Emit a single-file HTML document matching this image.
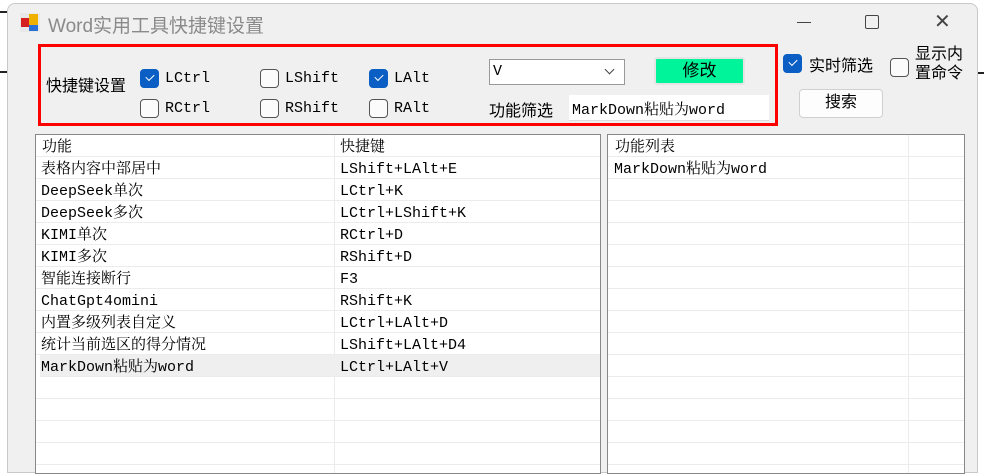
<!DOCTYPE html>
<html><head><meta charset="utf-8"><style>
*{margin:0;padding:0;box-sizing:border-box}
body{width:984px;height:462px;background:#fff;position:relative;overflow:hidden;font-family:"Liberation Sans","Noto Sans CJK SC",sans-serif}
.a{position:absolute}
.win{left:7px;top:3px;width:971px;height:470px;background:#f0f0f0;border:1px solid #c8c8c8;border-radius:8px 8px 0 0}
.mono{font-family:"Liberation Mono","Noto Serif CJK SC",monospace;font-size:15px;color:#000}
.cb{width:19px;height:19px;border:1px solid #555;border-radius:4px;background:#fbfbfb}
.cb.on{background:#0a5ec4;border-color:#0a5ec4}
.cb.on:after{content:"";position:absolute;left:5px;top:4px;width:7px;height:4px;border-left:1.5px solid #fff;border-bottom:1.5px solid #fff;transform:rotate(-45deg)}
.lbl{font-size:16px;color:#000}
.grid{background:#fff;border:1px solid #888}
.row{position:absolute;left:0;right:0;height:22px;border-bottom:1px solid #ececec}
.row span{position:absolute;top:4px;line-height:18px}
</style></head><body>
<div class="a" style="left:0;top:11px;width:8px;height:2px;background:#222"></div>
<div class="a" style="left:0;top:71px;width:8px;height:2px;background:#222"></div>
<div class="a" style="left:976px;top:72px;width:8px;height:2px;background:#222"></div>
<div class="a win"></div>
<div class="a" style="left:20px;top:13px;width:20px;height:19px">
<div class="a" style="left:0;top:0;width:20px;height:19px;background:#e8e8e8"></div>
<div class="a" style="left:1px;top:5px;width:8px;height:9px;background:#d42020"></div>
<div class="a" style="left:9px;top:1px;width:9px;height:11px;background:#f0b000"></div>
<div class="a" style="left:9px;top:12px;width:9px;height:6px;background:#2a6fd6"></div>
</div>
<div class="a" style="left:48px;top:11px;font-size:19px;color:#8a8a8a">Word实用工具快捷键设置</div>
<div class="a" style="left:797px;top:22px;width:14px;height:1px;background:#444"></div>
<div class="a" style="left:865px;top:15px;width:14px;height:14px;border:1px solid #444;border-radius:2px"></div>
<div class="a" style="left:934px;top:13px;font-size:20px;color:#444;line-height:18px">✕</div>
<div class="a" style="left:38px;top:44px;width:740px;height:82px;border:3px solid #f00"></div>
<div class="a lbl" style="left:46px;top:72px">快捷键设置</div>
<div class="a cb on" style="left:140px;top:69px"></div><div class="a mono" style="left:165px;top:70px">LCtrl</div>
<div class="a cb" style="left:260px;top:69px"></div><div class="a mono" style="left:285px;top:70px">LShift</div>
<div class="a cb on" style="left:369px;top:69px"></div><div class="a mono" style="left:394px;top:70px">LAlt</div>
<div class="a cb" style="left:140px;top:99px"></div><div class="a mono" style="left:165px;top:100px">RCtrl</div>
<div class="a cb" style="left:260px;top:99px"></div><div class="a mono" style="left:285px;top:100px">RShift</div>
<div class="a cb" style="left:369px;top:99px"></div><div class="a mono" style="left:394px;top:100px">RAlt</div>
<div class="a" style="left:489px;top:59px;width:136px;height:26px;background:#fff;border:1px solid #999"></div>
<div class="a mono" style="left:493px;top:63px">V</div>
<div class="a" style="left:606px;top:66px;width:7px;height:7px;border-right:1px solid #444;border-bottom:1px solid #444;transform:rotate(45deg)"></div>
<div class="a" style="left:654px;top:57px;width:91px;height:28px;background:#00f59a;border:2px solid #e4e4e4;border-radius:3px;text-align:center;font-size:17px;line-height:23px">修改</div>
<div class="a lbl" style="left:489px;top:97px">功能筛选</div>
<div class="a" style="left:569px;top:95px;width:200px;height:26px;background:#fff;border-bottom:1px solid #ddd"></div>
<div class="a mono" style="left:572px;top:98px">MarkDown粘贴为word</div>
<div class="a cb on" style="left:783px;top:54px"></div><div class="a lbl" style="left:809px;top:52px">实时筛选</div>
<div class="a cb" style="left:890px;top:58px"></div><div class="a lbl" style="left:915px;top:45px;line-height:19px">显示内<br>置命令</div>
<div class="a" style="left:799px;top:89px;width:84px;height:29px;background:#fdfdfd;border:1px solid #d0d0d0;border-radius:4px;text-align:center;font-size:16px;line-height:26px">搜索</div>
<div class="a grid mono" style="left:35px;top:134px;width:566px;height:340px">
<div class="a" style="left:298px;top:0;bottom:0;width:1px;background:#ececec"></div>
<div class="row" style="top:0"><span style="left:6px">功能</span><span style="left:304px">快捷键</span></div>
<div class="row" style="top:22px"><span style="left:5px">表格内容中部居中</span><span style="left:304px">LShift+LAlt+E</span></div>
<div class="row" style="top:44px"><span style="left:5px">DeepSeek单次</span><span style="left:304px">LCtrl+K</span></div>
<div class="row" style="top:66px"><span style="left:5px">DeepSeek多次</span><span style="left:304px">LCtrl+LShift+K</span></div>
<div class="row" style="top:88px"><span style="left:5px">KIMI单次</span><span style="left:304px">RCtrl+D</span></div>
<div class="row" style="top:110px"><span style="left:5px">KIMI多次</span><span style="left:304px">RShift+D</span></div>
<div class="row" style="top:132px"><span style="left:5px">智能连接断行</span><span style="left:304px">F3</span></div>
<div class="row" style="top:154px"><span style="left:5px">ChatGpt4omini</span><span style="left:304px">RShift+K</span></div>
<div class="row" style="top:176px"><span style="left:5px">内置多级列表自定义</span><span style="left:304px">LCtrl+LAlt+D</span></div>
<div class="row" style="top:198px"><span style="left:5px">统计当前选区的得分情况</span><span style="left:304px">LShift+LAlt+D4</span></div>
<div class="row" style="top:220px;background:#efefef;left:4px"><span style="left:1px">MarkDown粘贴为word</span><span style="left:300px">LCtrl+LAlt+V</span></div>
<div class="row" style="top:242px"></div><div class="row" style="top:264px"></div><div class="row" style="top:286px"></div><div class="row" style="top:308px"></div>
</div>
<div class="a grid mono" style="left:607px;top:134px;width:358px;height:340px">
<div class="a" style="left:300px;top:0;bottom:0;width:1px;background:#ececec"></div>
<div class="row" style="top:0"><span style="left:7px">功能列表</span></div>
<div class="row" style="top:22px"><span style="left:6px">MarkDown粘贴为word</span></div>
<div class="row" style="top:44px"></div><div class="row" style="top:66px"></div><div class="row" style="top:88px"></div><div class="row" style="top:110px"></div><div class="row" style="top:132px"></div><div class="row" style="top:154px"></div><div class="row" style="top:176px"></div><div class="row" style="top:198px"></div><div class="row" style="top:220px"></div><div class="row" style="top:242px"></div><div class="row" style="top:264px"></div><div class="row" style="top:286px"></div><div class="row" style="top:308px"></div>
</div>
</body></html>
